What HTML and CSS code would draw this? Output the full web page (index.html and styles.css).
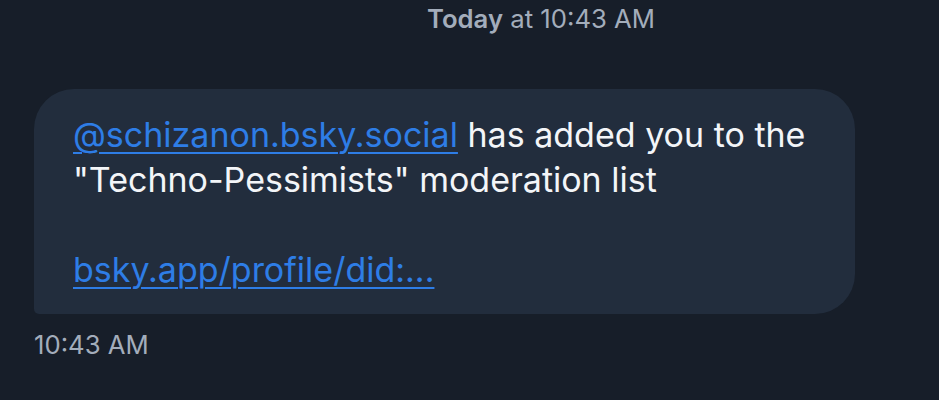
FILE: index.html
```html
<!DOCTYPE html>
<html>
<head>
<meta charset="utf-8">
<link rel="stylesheet" href="styles.css">
</head>
<body>
<div class="chat">
  <div class="day"><b>Today</b> at 10:43 AM</div>
  <div class="bubble">
    <p class="msg"><a class="link" href="#">@schizanon.bsky.social</a> has added you to the "Techno-Pessimists" moderation list</p>
    <p class="msg gap"><a class="link" href="#">bsky.app/profile/did:...</a></p>
  </div>
  <div class="time">10:43 AM</div>
</div>
</body>
</html>
```
FILE: styles.css
```css
html, body {
  margin: 0;
  padding: 0;
  background: #171e29;
  font-family: Inter, "Noto Sans", sans-serif;
}
.chat {
  width: 939px;
  height: 400px;
  box-sizing: border-box;
  padding: 4px 0 0 34px;
  display: flex;
  flex-direction: column;
  align-items: flex-start;
}
.day {
  align-self: stretch;
  text-align: center;
  padding-left: 109px;
  color: #a3adbb;
  font-size: 25.7px;
  line-height: 30px;
}
.day b { font-weight: 600; }
.bubble {
  margin-top: 55px;
  width: 821px;
  box-sizing: border-box;
  background: #222d3d;
  border-radius: 40px 40px 40px 5px;
  padding: 23px 39px 22px 39px;
}
.msg {
  margin: 0;
  color: #f3f5f8;
  font-size: 34px;
  line-height: 45px;
}
.gap { margin-top: 45px; }
.link {
  color: #2e7de6;
  text-decoration: underline;
  text-decoration-thickness: 2px;
  text-underline-offset: 5px;
}
.time {
  margin-top: 16px;
  color: #a3adbb;
  font-size: 25.7px;
  line-height: 30px;
}
```
